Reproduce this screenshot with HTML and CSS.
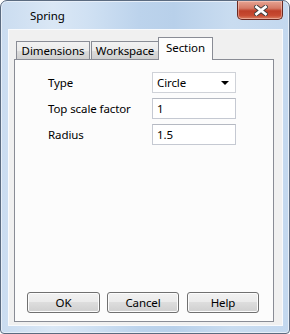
FILE: index.html
```html
<!DOCTYPE html>
<html>
<head>
<meta charset="utf-8">
<link rel="stylesheet" href="styles.css">
</head>
<body>
<div class="window">
  <div class="titlebar">
    <span class="title">Spring</span>
    <div class="close">
      <svg width="14" height="11" viewBox="0 0 14 11">
        <path d="M2.5 2 L11.5 9 M11.5 2 L2.5 9" stroke="#3c3c3c" stroke-width="4.6" stroke-linecap="square" fill="none"/>
        <path d="M2.5 2 L11.5 9 M11.5 2 L2.5 9" stroke="#ffffff" stroke-width="2.8" stroke-linecap="square" fill="none"/>
      </svg>
    </div>
  </div>
  <div class="client">
    <div class="tabs">
      <div class="tab tab-dim">Dimensions</div>
      <div class="tab tab-ws">Workspace</div>
      <div class="tab tab-sec active">Section</div>
    </div>
    <div class="panel">
      <div class="form">
        <div class="label">Type</div>
        <div class="field combo"><span>Circle</span><span class="arrow"></span></div>
        <div class="label">Top scale factor</div>
        <div class="field">1</div>
        <div class="label">Radius</div>
        <div class="field">1.5</div>
      </div>
      <div class="buttons">
        <div class="btn">OK</div>
        <div class="btn">Cancel</div>
        <div class="btn">Help</div>
      </div>
    </div>
  </div>
</div>
</body>
</html>
```
FILE: styles.css
```css
* { box-sizing: border-box; }
html, body {
  margin: 0;
  padding: 0;
  background: #ffffff;
}
body {
  width: 290px;
  height: 334px;
  font-family: "Noto Sans", "Open Sans", sans-serif;
  font-size: 11.5px;
  letter-spacing: -0.1px;
  color: #000;
}
.window {
  width: 290px;
  height: 334px;
  border: 1px solid #5b6b80;
  border-radius: 7px 7px 4px 4px;
  background: linear-gradient(90deg, #cadcf0 0%, #dae7f5 18%, #d0e1f3 30%, #bcd3ec 48%, #b8d0ea 60%, #c9dcf0 80%, #c3d8ef 100%);
  padding: 0 6px 7px 7px;
  display: flex;
  flex-direction: column;
  overflow: hidden;
  box-shadow: inset 0 0 0 1px #e6eef8;
}
.titlebar {
  height: 28px;
  display: flex;
  justify-content: space-between;
  align-items: flex-start;
  margin-left: -7px;
  margin-right: -6px;
  padding-right: 6px;
}
.title {
  padding-left: 29px;
  padding-top: 7px;
  line-height: 15px;
  color: #000;
}
.close {
  width: 46px;
  height: 19px;
  border: 1px solid #6b2a22;
  border-top: none;
  border-radius: 0 0 5px 5px;
  background: linear-gradient(180deg, #e6a493 0%, #d57a66 40%, #be3f28 55%, #c74a31 80%, #da7f62 100%);
  display: flex;
  align-items: center;
  justify-content: center;
  box-shadow: inset 0 0 0 1px rgba(255,220,210,0.45);
}
.close svg { display: block; margin-left: 1px; }
.client {
  flex: 1;
  background: #f0f0f0;
  border: 1px solid #f8fafd;
  padding: 7px 8px 3px 5px;
  display: flex;
  flex-direction: column;
}
.tabs {
  display: flex;
  align-items: flex-end;
  height: 22px;
  margin-left: 2px;
}
.tab {
  height: 18px;
  border: 1px solid #898c95;
  border-bottom: none;
  background: linear-gradient(180deg, #f2f2f2 0%, #ebebeb 50%, #dddddd 51%, #cfcfcf 100%);
  text-align: center;
  line-height: 17px;
  white-space: nowrap;
}
.tab-dim { width: 74px; margin-right: 1px; }
.tab-ws { width: 68px; }
.tab-sec { width: 55px; margin-left: -1px; }
.tab.active {
  height: 23px;
  margin-bottom: -1px;
  background: #fdfdfd;
  position: relative;
  z-index: 1;
  line-height: 19px;
}
.panel {
  flex: 1;
  border: 1px solid #898c95;
  background: #fcfcfc;
  display: flex;
  flex-direction: column;
}
.form {
  display: grid;
  grid-template-columns: 104px 84px;
  grid-auto-rows: 21px;
  row-gap: 5px;
  padding: 12px 0 0 33px;
  align-items: center;
}
.label { line-height: 15px; }
.field {
  height: 21px;
  border: 1px solid #c5c9d2;
  border-top-color: #b5b9c2;
  background: #ffffff;
  padding-left: 4px;
  line-height: 19px;
}
.combo {
  display: flex;
  justify-content: space-between;
  align-items: center;
  padding-right: 6px;
  border-color: #cfd2d8;
}
.arrow {
  width: 0;
  height: 0;
  border-left: 4px solid transparent;
  border-right: 4px solid transparent;
  border-top: 4px solid #000;
  margin-top: 1px;
}
.buttons {
  margin-top: auto;
  display: flex;
  gap: 8px;
  padding: 0 0 8px 12px;
}
.btn {
  width: 72px;
  height: 21px;
  border: 1px solid #707070;
  border-radius: 3px;
  background: linear-gradient(180deg, #f2f2f2 0%, #ebebeb 45%, #dddddd 50%, #cfcfcf 100%);
  box-shadow: inset 0 0 0 1px #fcfcfc;
  text-align: center;
  line-height: 19px;
}
.btn:first-child { width: 73px; margin-right: -1px; }
```
